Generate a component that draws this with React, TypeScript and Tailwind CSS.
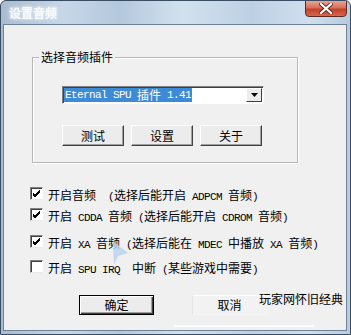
import React from "react"

const cjk = /([\u3000-\u9fff\uff00-\uffef]+)/

function Sim({ text }: { text: string }) {
  const parts = text.split(cjk).filter((p) => p.length > 0)
  return (
    <>
      {parts.map((p, i) =>
        cjk.test(p) ? (
          <span key={i} className="font-['Noto_Sans_CJK_SC',sans-serif] text-[12px]">
            {p}
          </span>
        ) : (
          <span key={i} className="font-['Liberation_Mono',monospace] text-[11px] tracking-[-0.6px] whitespace-pre">
            {p}
          </span>
        )
      )}
    </>
  )
}

function Check({ on }: { on: boolean }) {
  return (
    <div className="w-[13px] h-[13px] bg-white border border-t-[#808080] border-l-[#808080] border-r-white border-b-[#e8e8e8] shadow-[inset_1px_1px_0_#404040] flex items-center justify-center">
      {on && (
        <svg width="9" height="9" viewBox="0 0 9 9">
          <path d="M1 4 L3 6 L8 1 M1 5 L3 7 L8 2 M1 6 L3 8 L8 3" stroke="#000" strokeWidth="1" fill="none" />
        </svg>
      )}
    </div>
  )
}

function Btn({ label, width = "w-[62px]" }: { label: string; width?: string }) {
  return (
    <div
      className={`${width} h-[21px] bg-[#ececec] border border-t-white border-l-white border-r-[#404040] border-b-[#404040] shadow-[inset_-1px_-1px_0_#a0a0a0] flex items-center justify-center text-black`}
    >
      <Sim text={label} />
    </div>
  )
}

const options = [
  { on: true, text: "开启音频  (选择后能开启 ADPCM 音频)", h: "h-[21px]" },
  { on: true, text: "开启 CDDA 音频 (选择后能开启 CDROM 音频)", h: "h-[27px]" },
  { on: true, text: "开启 XA 音频 (选择后能在 MDEC 中播放 XA 音频)", h: "h-[25px]" },
  { on: false, text: "开启 SPU IRQ  中断 (某些游戏中需要)", h: "h-[21px]" },
]

export default function App() {
  return (
    <div className="w-[351px] h-[335px] flex flex-col border border-[#3a4e63] rounded-t-[6px] pl-[2px] pr-[3px] pb-[3px] bg-[linear-gradient(90deg,#a9bccf,#c6d7e8_18%,#b4c8dc_34%,#d2e1ee_52%,#bdd0e3_72%,#cfdfee_88%,#b8cbdd)] overflow-hidden">
      {/* Title bar */}
      <div className="h-[23px] flex items-start justify-between relative">
        <span className="mt-[5px] ml-[6px] text-[12px] font-bold text-white font-['Noto_Sans_CJK_SC',sans-serif] [text-shadow:0_0_4px_#ffffff,0_0_2px_#dbe6f0] opacity-90 blur-[0.5px] leading-[14px]">
          设置音频
        </span>
        <div className="w-[42px] h-[17px] -mt-[1px] rounded-b-[4px] border border-[#5b2a24] bg-[linear-gradient(180deg,#e9a595,#d6705c_45%,#c2412b_55%,#d8664e)] flex items-center justify-center">
          <svg width="14" height="11" viewBox="0 0 14 11">
            <path d="M2 1 L12 10 M12 1 L2 10" stroke="#5a2a22" strokeWidth="4" strokeLinecap="square" />
            <path d="M2 1 L12 10 M12 1 L2 10" stroke="#ffffff" strokeWidth="2.2" strokeLinecap="square" />
          </svg>
        </div>
      </div>

      {/* Client area */}
      <div className="flex-1 relative bg-[#f0f0f0] border border-[#6d8298] flex flex-col pl-[26px] pt-[24px]">
        {/* Group box */}
        <div className="ml-[2px] w-[266px] h-[106px] mt-[8px] border border-[#b8b8b8] shadow-[1px_1px_0_#ffffff,inset_1px_1px_0_#ffffff] relative flex flex-col pl-[29px] pt-[28px]">
          <span className="absolute -top-[10px] left-[6px] px-[2px] bg-[#f0f0f0] text-[12px] leading-[18px] text-black font-['Noto_Sans_CJK_SC',sans-serif]">
            选择音频插件
          </span>
          {/* Combo */}
          <div className="w-[202px] h-[18px] bg-white border border-t-[#808080] border-l-[#808080] border-r-white border-b-white shadow-[inset_1px_1px_0_#404040] flex items-center pl-[1px] pr-[1px]">
            <div className="h-[14px] w-[128px] bg-[#3d8ad6] text-white flex items-center leading-[14px] pl-[1px]">
              <Sim text="Eternal SPU 插件 1.41" />
            </div>
            <div className="flex-1" />
            <div className="w-[16px] h-[14px] bg-[#ececec] border border-t-white border-l-white border-r-[#404040] border-b-[#404040] flex items-center justify-center">
              <svg width="7" height="4" viewBox="0 0 7 4">
                <path d="M0 0 L7 0 L3.5 4 Z" fill="#000" />
              </svg>
            </div>
          </div>
          {/* Buttons */}
          <div className="flex gap-[7px] mt-[21px]">
            <Btn label="测试" />
            <Btn label="设置" />
            <Btn label="关于" />
          </div>
        </div>

        {/* Options */}
        <div className="mt-[21px] flex flex-col">
          {options.map((o) => (
            <div key={o.text} className={`${o.h} flex items-start`}>
              <div className="mt-[3px]">
                <Check on={o.on} />
              </div>
              <div className="ml-[5px] leading-[20px] text-black whitespace-pre">
                <Sim text={o.text} />
              </div>
            </div>
          ))}
        </div>

        {/* Bottom buttons */}
        <div className="flex gap-[38px] ml-[49px] mt-[17px]">
          <div className="w-[75px] h-[20px] border border-black bg-[#ececec] shadow-[inset_1px_1px_0_#ffffff,inset_-1px_-1px_0_#404040,inset_-2px_-2px_0_#a0a0a0] flex items-center justify-center">
            <Sim text="确定" />
          </div>
          <div className="w-[75px] h-[20px] border border-t-white border-l-[#e4e4e4] border-r-[#f6f6f6] border-b-[#f6f6f6] bg-[#f2f2f2] flex items-center justify-center">
            <Sim text="取消" />
          </div>
        </div>

        {/* Watermark overlays */}
        <span className="absolute left-[255px] top-[266px] text-[12px] leading-[16px] text-black font-['Noto_Sans_CJK_SC',sans-serif]">
          玩家网怀旧经典
        </span>
        <div className="absolute left-[170px] top-[300px] w-[140px] h-[2px] bg-white opacity-80" />
        <svg className="absolute left-[107px] top-[215px]" width="18" height="26" viewBox="0 0 18 26">
          <path d="M2 1 L17 13 L7 16 L3 25 Z" fill="#b8d4f0" opacity="0.85" />
        </svg>
      </div>
    </div>
  )
}
